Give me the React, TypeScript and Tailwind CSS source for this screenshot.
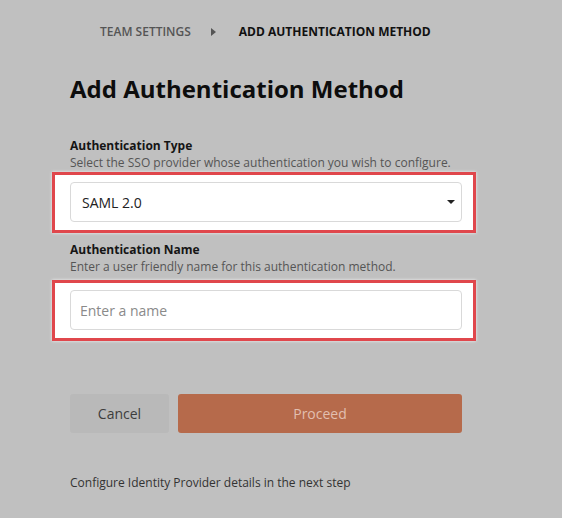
import type { ReactNode } from "react";

const font = { fontFamily: '"Open Sans", "Noto Sans", sans-serif' };

function Spotlight({ children }: { children: ReactNode }) {
  return (
    <div className="relative">
      <div className="absolute -left-[18px] -right-[14px] -top-[10px] -bottom-[11px] border-[3px] border-[#e0474c] bg-white shadow-[0_0_3px_rgba(255,255,255,0.8)]" />
      <div className="relative">{children}</div>
    </div>
  );
}

function Field({
  label,
  hint,
  children,
  className,
}: {
  label: string;
  hint: string;
  children: ReactNode;
  className?: string;
}) {
  return (
    <div className={className}>
      <p className="text-[12px] font-bold leading-[17px] text-[#151515]">{label}</p>
      <p className="text-[12px] leading-[17px] text-[#555]">{hint}</p>
      {children}
    </div>
  );
}

export default function App() {
  return (
    <div className="min-h-screen w-full bg-[#c0c0c0]" style={font}>
      <div className="w-[392px] pl-[70px] box-content pt-[24px]">
        <nav className="flex items-center pl-[30px] text-[12px] leading-4 uppercase">
          <span className="font-semibold text-[#555]">Team Settings</span>
          <svg viewBox="0 0 5 8" className="mx-[20px] h-[8px] w-[5px] fill-[#555]">
            <path d="M0 0 L5 4 L0 8 Z" />
          </svg>
          <span className="ml-[3px] font-bold text-[#111]">Add Authentication Method</span>
        </nav>

        <h1 className="mt-[33px] text-[24px] font-bold leading-8 text-[#0d0d0d]">
          Add Authentication Method
        </h1>

        <Field
          className="mt-[32px]"
          label="Authentication Type"
          hint="Select the SSO provider whose authentication you wish to configure."
        >
          <div className="mt-[11px]">
            <Spotlight>
              <div className="flex h-[40px] items-center justify-between rounded-[4px] border border-[#d9d9d9] bg-white pl-[11px] pr-[5px] text-[14px] text-[#222]">
                <span>SAML 2.0</span>
                <svg viewBox="0 0 8 4" className="mr-[1px] h-[4px] w-[8px] fill-[#222]">
                  <path d="M0 0 L8 0 L4 4 Z" />
                </svg>
              </div>
            </Spotlight>
          </div>
        </Field>

        <Field
          className="mt-[19px]"
          label="Authentication Name"
          hint="Enter a user friendly name for this authentication method."
        >
          <div className="mt-[15px]">
            <Spotlight>
              <input
                placeholder="Enter a name"
                className="block h-[40px] w-full rounded-[4px] border border-[#d9d9d9] bg-white px-[9px] text-[14px] text-[#222] outline-none placeholder:text-[#8a8a8a]"
                style={font}
              />
            </Spotlight>
          </div>
        </Field>

        <div className="mt-[64px] flex gap-[9px]">
          <button className="h-[39px] w-[99px] rounded-[3px] bg-[#b9b9b9] text-[14px] text-[#3d3d3d]">
            Cancel
          </button>
          <button className="h-[39px] flex-1 rounded-[3px] bg-[#b66a4b] text-[14px] text-[#e2bfb0]">
            Proceed
          </button>
        </div>

        <p className="mt-[42px] text-[12px] leading-4 text-[#333]">
          Configure Identity Provider details in the next step
        </p>
      </div>
    </div>
  );
}
